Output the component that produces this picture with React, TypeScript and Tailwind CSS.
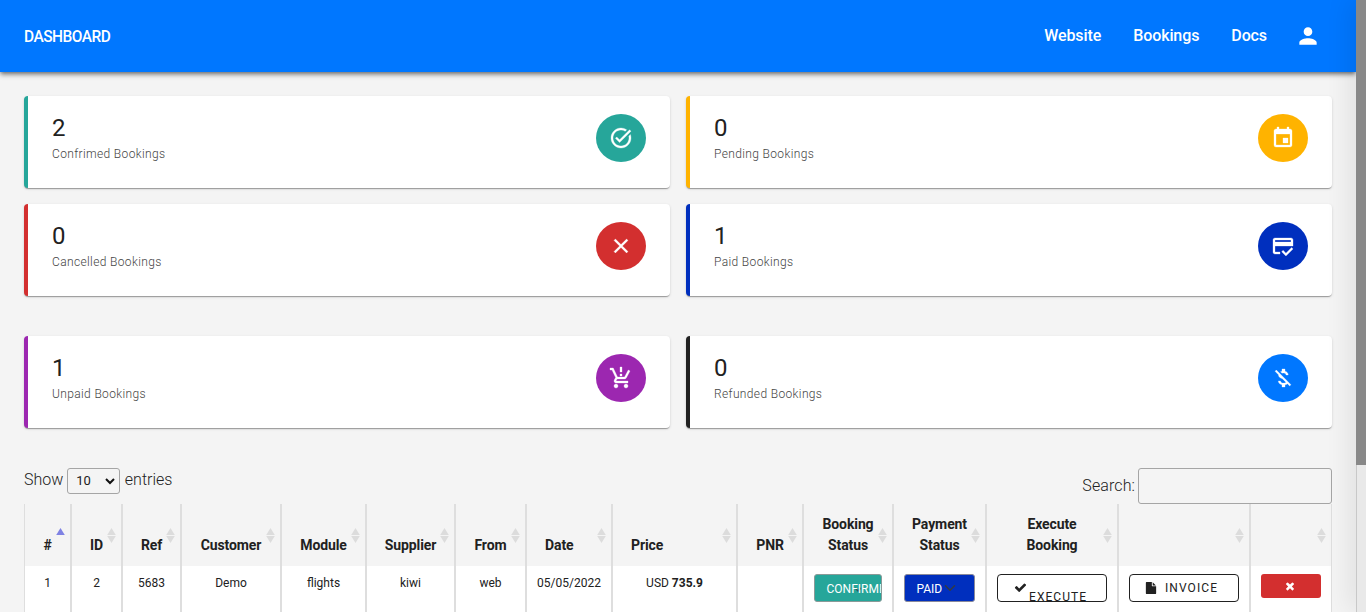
import React from "react";
import type { IconType } from "react-icons";
import {
  MdClose,
  MdEvent,
  MdMoneyOff,
  MdOutlineCreditScore,
  MdPerson,
  MdProductionQuantityLimits,
  MdTaskAlt,
} from "react-icons/md";

type Stat = { value: number; label: string; border: string; bg: string; Icon: IconType };

const topStats: Stat[] = [
  { value: 2, label: "Confrimed Bookings", border: "border-[#26a69a]", bg: "bg-[#26a69a]", Icon: MdTaskAlt },
  { value: 0, label: "Pending Bookings", border: "border-[#ffb300]", bg: "bg-[#ffb300]", Icon: MdEvent },
  { value: 0, label: "Cancelled Bookings", border: "border-[#d32f2f]", bg: "bg-[#d32f2f]", Icon: MdClose },
  { value: 1, label: "Paid Bookings", border: "border-[#002fbe]", bg: "bg-[#002fbe]", Icon: MdOutlineCreditScore },
];

const bottomStats: Stat[] = [
  { value: 1, label: "Unpaid Bookings", border: "border-[#9c27b0]", bg: "bg-[#9c27b0]", Icon: MdProductionQuantityLimits },
  { value: 0, label: "Refunded Bookings", border: "border-[#212121]", bg: "bg-[#0077ff]", Icon: MdMoneyOff },
];

function StatCard({ value, label, border, bg, Icon }: Stat) {
  return (
    <div
      className={`flex h-[92px] items-start justify-between rounded border-l-4 bg-white pt-[18px] pr-6 pl-6 shadow-[0_2px_1px_-1px_rgba(0,0,0,0.2),0_1px_1px_0_rgba(0,0,0,0.14),0_1px_3px_0_rgba(0,0,0,0.12)] ${border}`}
    >
      <div>
        <div className="h-7 text-2xl leading-7 font-normal text-[#212121]">{value}</div>
        <div className="mt-0.5 text-xs leading-5 font-light tracking-[0.36px] text-[#444]">{label}</div>
      </div>
      <div className={`flex h-12 w-[50px] items-center justify-center rounded-[50%] text-white ${bg}`}>
        <Icon size={24} className="[stroke-width:0.3] [&_path[fill=none]]:stroke-none" />
      </div>
    </div>
  );
}

function SortMarks({ active }: { active?: boolean }) {
  return (
    <svg className="absolute top-6 right-[5px] h-[15px] w-[9px]" viewBox="0 0 9 15">
      <path d="M4.5 0 8.8 7H.2z" fill={active ? "#7f82e3" : "#dcdcdc"} />
      {!active && <path d="M.2 8h8.6l-4.3 7z" fill="#dcdcdc" />}
    </svg>
  );
}

const columns: { title: string[]; width: string; left?: boolean }[] = [
  { title: ["#"], width: "w-[47px]" },
  { title: ["ID"], width: "w-[51px]" },
  { title: ["Ref"], width: "w-[59px]" },
  { title: ["Customer"], width: "w-[100px]" },
  { title: ["Module"], width: "w-[85px]" },
  { title: ["Supplier"], width: "w-[89px]" },
  { title: ["From"], width: "w-[71px]" },
  { title: ["Date"], width: "w-[86px]", left: true },
  { title: ["Price"], width: "w-[125px]", left: true },
  { title: ["PNR"], width: "w-[66px]" },
  { title: ["Booking", "Status"], width: "w-[90px]" },
  { title: ["Payment", "Status"], width: "w-[93px]" },
  { title: ["Execute", "Booking"], width: "w-[132px]" },
  { title: [], width: "w-[132px]" },
  { title: [], width: "w-[82px]" },
];

const cells: React.ReactNode[] = [
  "1",
  "2",
  "5683",
  "Demo",
  "flights",
  "kiwi",
  "web",
  "05/05/2022",
  <>
    USD <b className="font-bold">735.9</b>
  </>,
  "",
  <div className="flex h-7 w-[68px] items-center overflow-hidden rounded-[3px] border border-[#8a9a98] bg-[#26a69a] pl-[11.5px] text-white">
    <span className="relative pt-0.5 font-normal whitespace-nowrap">
      <svg className="absolute top-[7px] left-[25px] h-2 w-3" viewBox="0 0 12 8">
        <path d="m3 3 3 3 3-3" fill="none" stroke="#343a40" strokeOpacity="0.7" strokeWidth="1.5" />
      </svg>
      <span className="relative">CONFIRMED</span>
    </span>
  </div>,
  <div className="flex h-7 w-[71px] items-center rounded-[3px] border border-[#8a8a9a] bg-[#002fbe] pl-[11.5px] text-white">
    <span className="pt-0.5 font-normal">PAID</span>
    <svg className="ml-[2px] h-3 w-3" viewBox="0 0 16 16">
      <path d="m2 5 6 6 6-6" fill="none" stroke="#343a40" strokeWidth="2" strokeLinecap="round" strokeLinejoin="round" />
    </svg>
  </div>,
  <div className="flex h-7 w-[110px] overflow-hidden rounded border border-[#212121] pl-4">
    <svg className="mt-[6px] h-[13px] w-[13px] shrink-0" viewBox="0 0 1792 1792">
      <path
        fill="#212121"
        d="M1671 566q0 40-28 68l-724 724-136 136q-28 28-68 28t-68-28l-136-136-362-362q-28-28-28-68t28-68l136-136q28-28 68-28t68 28l294 295 656-657q28-28 68-28t68 28l136 136q28 28 28 68z"
      />
    </svg>
    <span className="mt-3 ml-[2px] leading-5 font-normal tracking-[1.07px]">EXECUTE</span>
  </div>,
  <div className="flex h-7 w-[110px] items-center rounded border border-[#212121] pl-[15px]">
    <svg className="h-3 w-3 shrink-0" viewBox="0 0 1792 1792">
      <path
        fill="#212121"
        d="M1152 512v-472q22 14 36 28l408 408q14 14 28 36h-472zm-128 32q0 40 28 68t68 28h544v1056q0 40-28 68t-68 28h-1344q-40 0-68-28t-28-68v-1600q0-40 28-68t68-28h800v544z"
      />
    </svg>
    <span className="ml-2 font-normal tracking-[1.07px]">INVOICE</span>
  </div>,
  <div className="flex h-6 w-[60px] items-center justify-center rounded-[3px] bg-[#d32f2f] pr-0.5">
    <svg className="h-3 w-3" viewBox="0 0 1792 1792">
      <path
        fill="#fff"
        d="M1490 1322q0 40-28 68l-136 136q-28 28-68 28t-68-28l-294-294-294 294q-28 28-68 28t-68-28l-136-136q-28-28-28-68t28-68l294-294-294-294q-28-28-28-68t28-68l136-136q28-28 68-28t68 28l294 294 294-294q28-28 68-28t68 28l136 136q28 28 28 68t-28 68l-294 294 294 294q28 28 28 68z"
      />
    </svg>
  </div>,
];

export default function App() {
  return (
    <div className="flex h-[612px] w-[1366px] overflow-hidden bg-[#f4f4f4] font-['Roboto',sans-serif] text-[#212121]">
      <div className="w-[1356px] shrink-0">
        <header className="relative flex h-[72px] items-center justify-between bg-[#0077ff] pr-[35px] pl-6 text-white shadow-[0_2px_4px_-1px_rgba(0,0,0,0.4),0_3px_5px_0_rgba(0,0,0,0.3)]">
          <span className="origin-left scale-x-[0.965] pt-0.5 text-base font-medium tracking-[-0.5px]">DASHBOARD</span>
          <nav className="flex items-center gap-8 text-base font-medium">
            <span className="tracking-[-0.1px]">Website</span>
            <span className="tracking-[-0.1px]">Bookings</span>
            <span className="tracking-[-0.1px]">Docs</span>
            <MdPerson size={26} className="-ml-1" />
          </nav>
        </header>

        <main className="px-6 pt-6">
          <div className="grid grid-cols-2 gap-4">
            {topStats.map((s) => (
              <StatCard key={s.label} {...s} />
            ))}
          </div>
          <div className="mt-10 grid grid-cols-2 gap-4">
            {bottomStats.map((s) => (
              <StatCard key={s.label} {...s} />
            ))}
          </div>

          <div className="mt-10 flex h-9 items-start justify-between text-base font-light">
            <div className="flex items-center">
              <span className="-mt-0.5">Show</span>
              <div className="mx-1 flex h-[26px] w-[53px] items-center justify-between rounded-[3px] border border-[#a5a5a5] pr-1 pl-2 text-[13px] font-normal">
                10
                <svg className="h-3 w-[10px]" viewBox="0 0 10 12">
                  <path d="m1 4 4 4 4-4" fill="none" stroke="#111" strokeWidth="2" />
                </svg>
              </div>
              <span className="-mt-0.5 ml-[0.5px]">entries</span>
            </div>
            <div className="flex items-center gap-[3px]">
              <span className="tracking-[0.1px]">Search:</span>
              <div className="h-9 w-[194px] rounded-[3px] border border-[#a5a5a5]" />
            </div>
          </div>

          <div className="flex h-[62px] text-sm leading-[21px] font-bold tracking-[-0.1px]">
            {columns.map((c, i) => (
              <div
                key={i}
                className={`relative flex shrink-0 flex-col justify-end border-x border-[#dedede] pb-2.5 ${c.left ? "pl-[18px] text-left" : "text-center"} ${c.width}`}
              >
                {c.title.map((line) => (
                  <span key={line}>{line}</span>
                ))}
                <SortMarks active={i === 0} />
              </div>
            ))}
          </div>
          <div className="flex h-[60px] bg-white text-xs leading-[18px] font-normal">
            {cells.map((cell, i) => (
              <div
                key={i}
                className={`flex shrink-0 border-x border-[#dedede] pt-2 ${i < 12 ? "justify-center whitespace-pre" : "pl-2.5"} ${columns[i].width}`}
              >
                {cell}
              </div>
            ))}
          </div>
        </main>
      </div>

      <aside className="relative h-[612px] w-[10px] shrink-0 border-l border-[#c8c8c8] bg-[#e9e9e9] shadow-[0_0_28px_rgba(0,0,0,0.2)]">
        <div className="-ml-px h-[465px] w-[10px] bg-[#888]" />
      </aside>
    </div>
  );
}
